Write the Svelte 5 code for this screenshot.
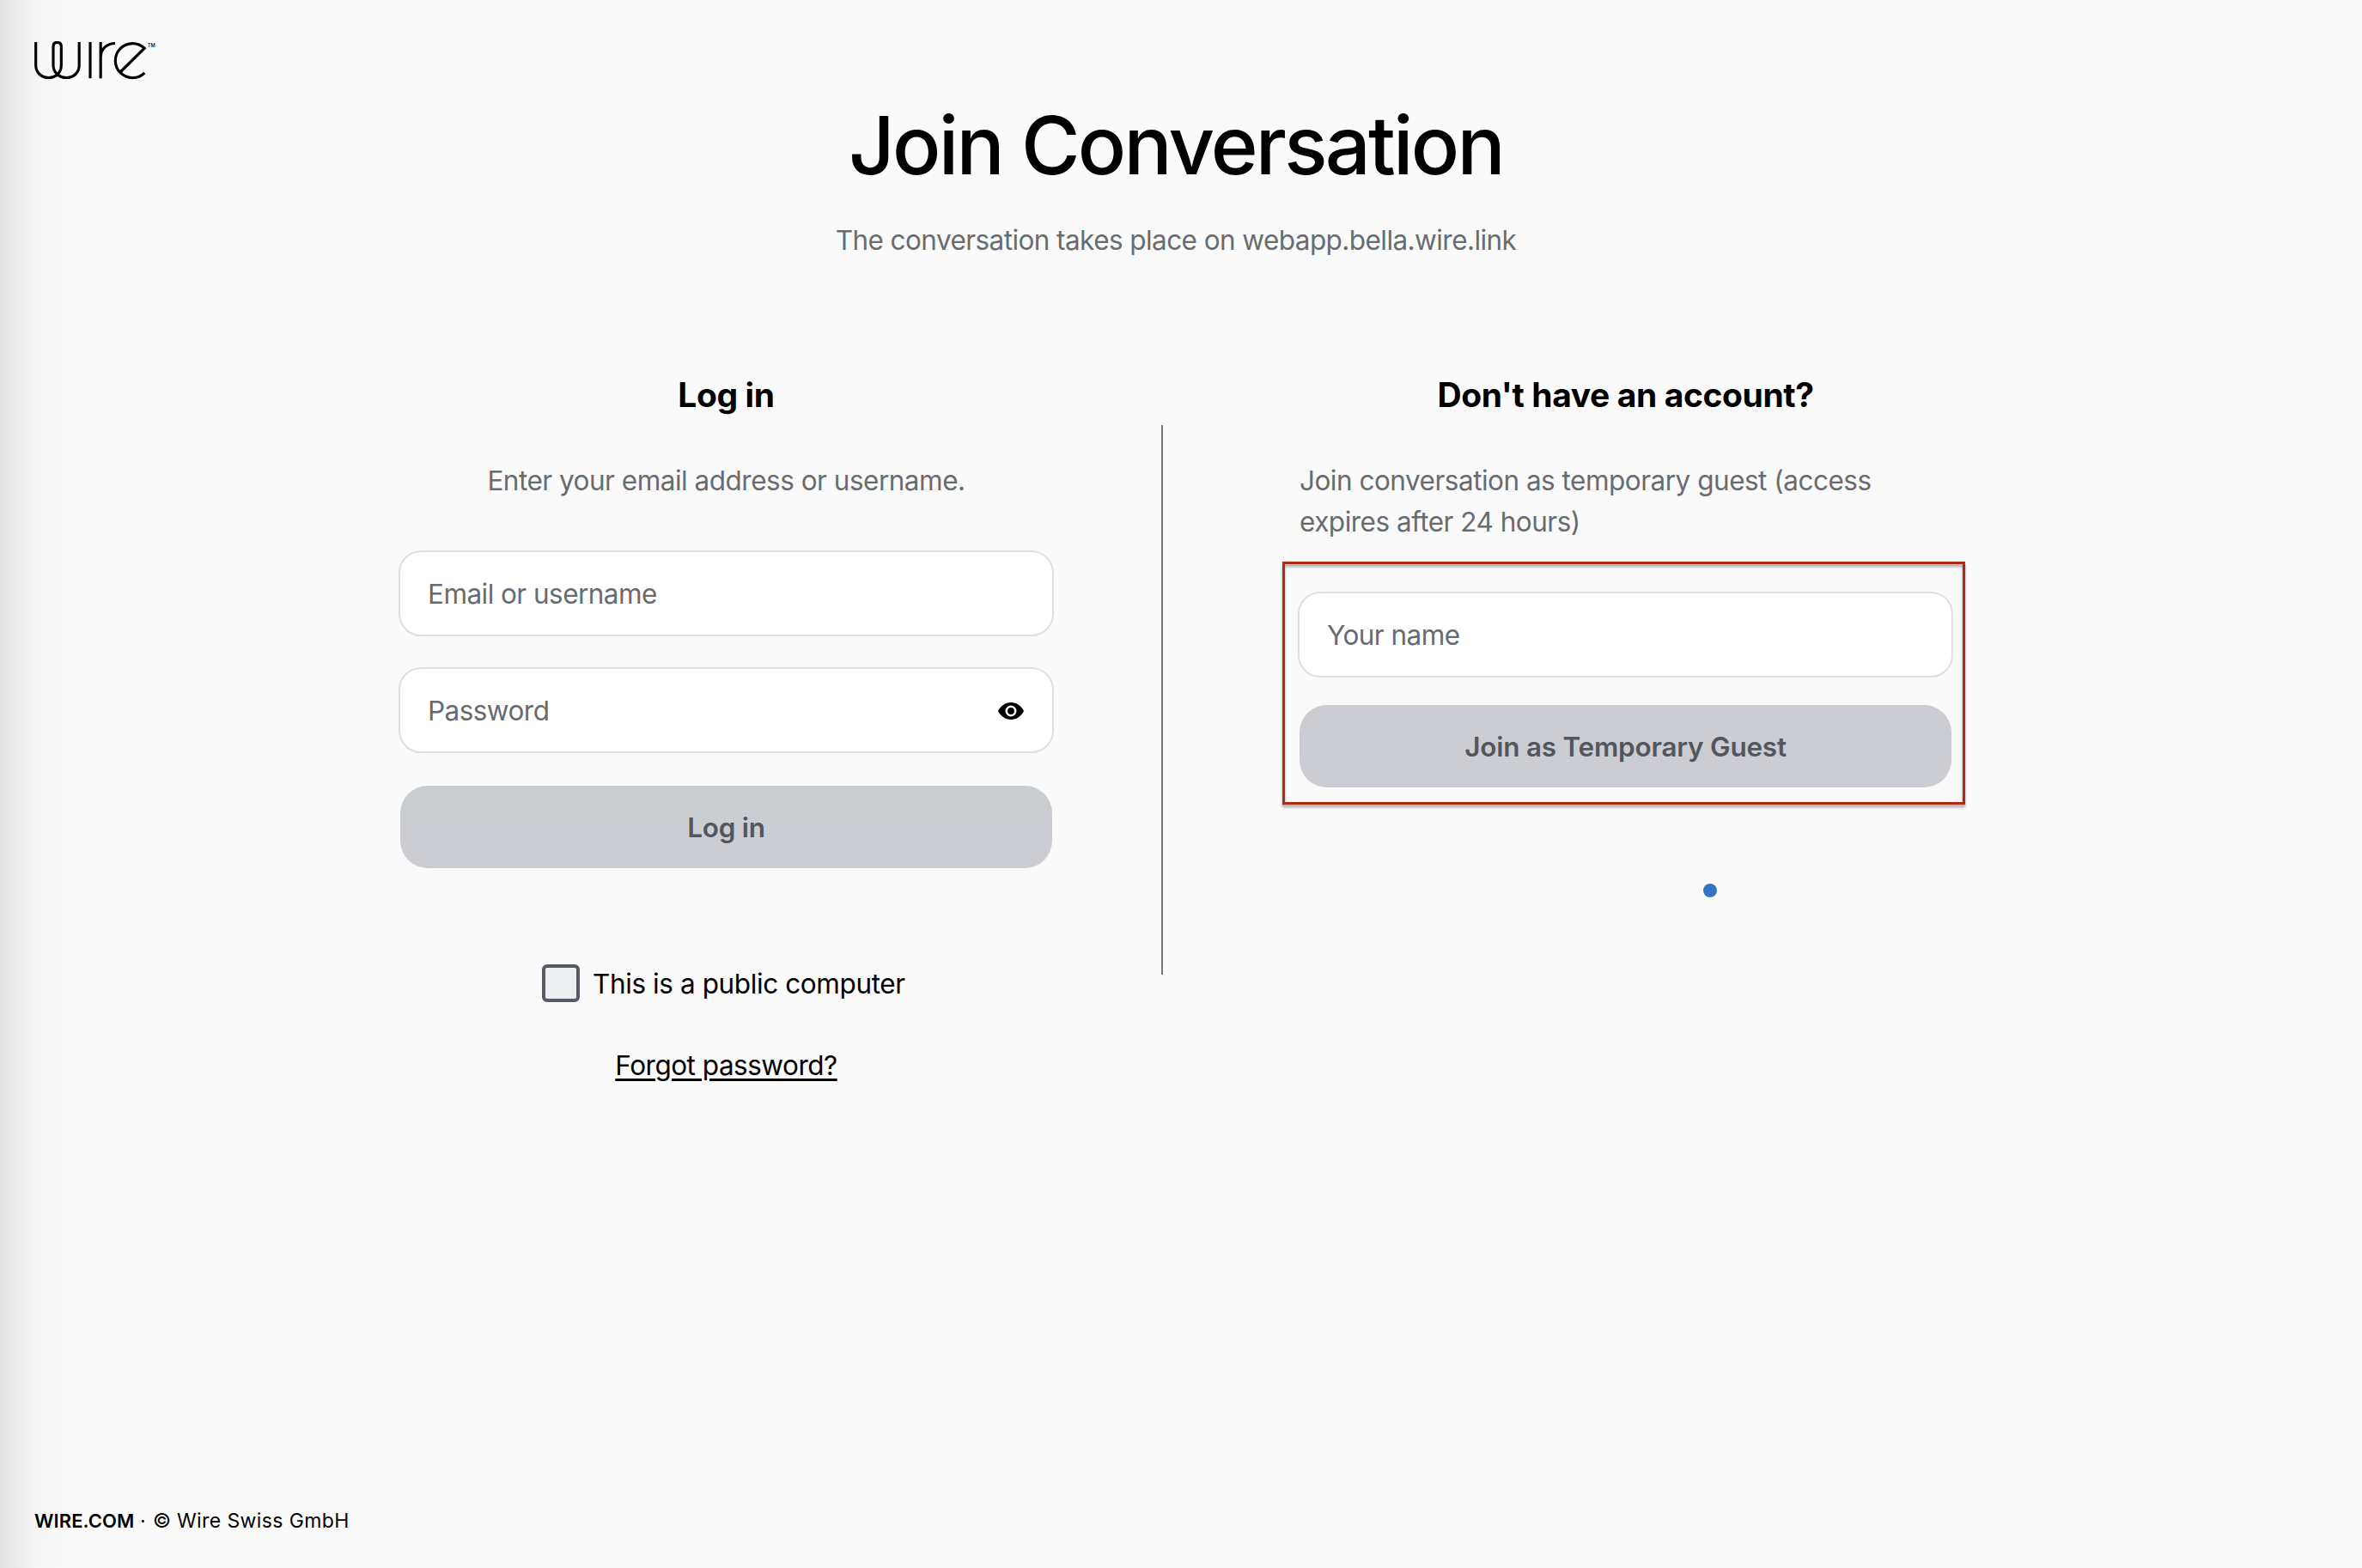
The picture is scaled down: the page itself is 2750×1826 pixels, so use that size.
<script>
  let email = '';
  let password = '';
  let guestName = '';
  let publicComputer = false;
  let showPassword = false;
</script>

<div class="page">
  <header class="topbar">
    <svg class="logo" viewBox="120 84 426 135" role="img" aria-label="Wire">
      <g fill="none" stroke="#000" stroke-width="9.5">
        <path d="M125 87V168C125 194 145 211.500 170 211.500S214 194 214 168V103C214 93 208 88 200 88S186 93 186 103V168C186 194 207 211.500 232 211.500S276.500 194 276.500 168V87" />
        <path d="M315 87V213.500" />
        <path d="M351.500 87V213.500M351.500 140C352 111 374 91.500 402 91.500" />
        <path d="M505 194.500A60 60 0 1 1 504.500 108.500L420 192" />
      </g>
      <text x="515" y="105" textLength="27" lengthAdjust="spacingAndGlyphs">TM</text>
    </svg>
  </header>

  <main class="content">
    <h1>Join Conversation</h1>
    <p class="subtitle">The conversation takes place on webapp.bella.wire.link</p>

    <div class="columns">
      <section class="column">
        <h2>Log in</h2>
        <p class="hint">Enter your email address or username.</p>

        <form class="login-form">
          <input class="field" type="text" placeholder="Email or username" bind:value={email} />
          <div class="password">
            <input
              class="field"
              type={showPassword ? 'text' : 'password'}
              placeholder="Password"
              bind:value={password}
            />
            <button
              class="toggle"
              type="button"
              aria-label="Toggle password visibility"
              on:click={() => (showPassword = !showPassword)}
            >
              <svg viewBox="0 0 30 20" width="30" height="20">
                <path d="M0 10C3 4 8.500 0 15 0S27 4 30 10C27 16 21.500 20 15 20S3 16 0 10Z" />
                <circle cx="15" cy="10" r="5.200" fill="none" stroke="#fff" stroke-width="2.600" />
              </svg>
            </button>
          </div>
          <button class="submit login-submit" type="submit" disabled>Log in</button>
        </form>

        <label class="public">
          <input type="checkbox" bind:checked={publicComputer} />
          <span>This is a public computer</span>
        </label>
        <a class="forgot" href="#forgot">Forgot password?</a>
      </section>

      <div class="divider"></div>

      <section class="column">
        <h2>Don't have an account?</h2>
        <p class="hint guest-hint">Join conversation as temporary guest (access expires after 24 hours)</p>

        <form class="guest-form">
          <input class="field" type="text" placeholder="Your name" bind:value={guestName} />
          <button class="submit guest-submit" type="submit" disabled>Join as Temporary Guest</button>
          <div class="highlight"></div>
        </form>

        <span class="dot"></span>
      </section>
    </div>
  </main>

  <footer class="footer">
    <b>WIRE.COM</b><span class="sep">·</span><span class="copy">©</span><span class="company">Wire Swiss GmbH</span>
  </footer>
</div>

<style>
  :global(body) {
    margin: 0;
    background: #fafafa;
  }

  .page {
    display: flex;
    flex-direction: column;
    box-sizing: border-box;
    height: 1826px;
    padding-bottom: 41px;
    overflow: hidden;
    font-family: Inter, 'Liberation Sans', sans-serif;
    font-size: 31.5px;
    line-height: 48px;
    letter-spacing: -0.5px;
    color: #000;
    background: linear-gradient(90deg, #e2e2e2 0, #ebebeb 18px, #f4f4f4 38px, #f8f8f8 58px, #fafafa 82px);
  }

  .topbar {
    height: 65px;
    padding: 48px 0 0 40px;
  }

  .logo {
    display: block;
    width: 142px;
    height: 45px;
  }

  .logo text {
    font-size: 19px;
    font-weight: 500;
    letter-spacing: 0;
  }

  .content {
    width: 2738px;
  }

  h1,
  h2,
  p {
    margin: 0;
    text-align: center;
  }

  h1 {
    font-size: 93.5px;
    line-height: 112px;
    font-weight: 500;
    letter-spacing: -2.8px;
  }

  .subtitle {
    margin-top: 31px;
    letter-spacing: -0.57px;
    color: #696c6f;
  }

  .columns {
    display: grid;
    grid-template-columns: 763px 2px 763px;
    justify-content: space-between;
    width: 1810px;
    margin: 132px auto 0;
  }

  .column {
    display: flex;
    flex-direction: column;
  }

  h2 {
    font-size: 39px;
    line-height: 48px;
    font-weight: 700;
    letter-spacing: -0.4px;
  }

  .hint {
    margin-top: 52px;
    color: #696c6f;
  }

  .guest-hint {
    padding: 0 60px 0 2px;
    text-align: left;
  }

  .login-form,
  .guest-form {
    position: relative;
    display: flex;
    flex-direction: column;
    margin-top: 57px;
  }

  .field {
    box-sizing: border-box;
    width: 100%;
    height: 100px;
    padding: 0 32px;
    border: 2px solid #dce0e3;
    border-radius: 26px;
    background: #fff;
    font: inherit;
    letter-spacing: -0.55px;
    color: #000;
    outline: none;
  }

  .field::placeholder {
    color: #676b71;
    opacity: 1;
  }

  .password {
    position: relative;
    display: flex;
    margin: 36px 0 38px;
  }

  .toggle {
    position: absolute;
    top: 41px;
    right: 35px;
    display: flex;
    padding: 0;
    border: 0;
    background: none;
  }

  .submit {
    height: 96px;
    margin-left: 2px;
    margin-right: 2px;
    padding: 2px 0 0;
    border: 0;
    border-radius: 32px;
    background: #cccdd2;
    font: inherit;
    font-weight: 600;
    letter-spacing: -0.24px;
    color: #54565e;
  }

  .login-submit {
    background: linear-gradient(#cacdd0 33px, #cccdd2 33px);
  }

  .guest-submit {
    margin-top: 32px;
  }

  .public {
    display: flex;
    align-items: center;
    gap: 15px;
    height: 44px;
    margin: 112px 0 0 167px;
    letter-spacing: -0.4px;
  }

  .public input {
    appearance: none;
    box-sizing: border-box;
    width: 44px;
    height: 44px;
    margin: 0;
    border: 4px solid #585a64;
    border-radius: 6px;
    background: #edeff0;
  }

  .public span {
    padding-top: 2px;
  }

  .forgot {
    align-self: center;
    margin-top: 50px;
    color: #000;
    text-decoration: underline;
    text-decoration-thickness: 3px;
    text-underline-offset: 4px;
  }

  .divider {
    width: 2px;
    height: 640px;
    margin: 59px 0 0 -16px;
    background: #75787b;
  }

  /* marks the guest fields */
  .highlight {
    position: absolute;
    top: -35px;
    right: -14px;
    bottom: -20px;
    left: -18px;
    border: 3px solid #a92d17;
    filter: drop-shadow(0 3px 1.5px rgba(0, 0, 0, 0.35));
    pointer-events: none;
  }

  .dot {
    width: 16px;
    height: 16px;
    margin: 112px 0 0 472px;
    border-radius: 50%;
    background: #3374c6;
    box-shadow: 0 1px 2px 2px #fff;
  }

  .footer {
    display: flex;
    margin-top: auto;
    padding-left: 40px;
    font-size: 23px;
    line-height: 28px;
    letter-spacing: 0;
  }

  .footer b {
    width: 123px;
    font-size: 22px;
    font-weight: 600;
    letter-spacing: 0.1px;
  }

  .sep {
    width: 15px;
  }

  .copy {
    width: 28px;
  }

  .company {
    letter-spacing: 0.4px;
  }
</style>
